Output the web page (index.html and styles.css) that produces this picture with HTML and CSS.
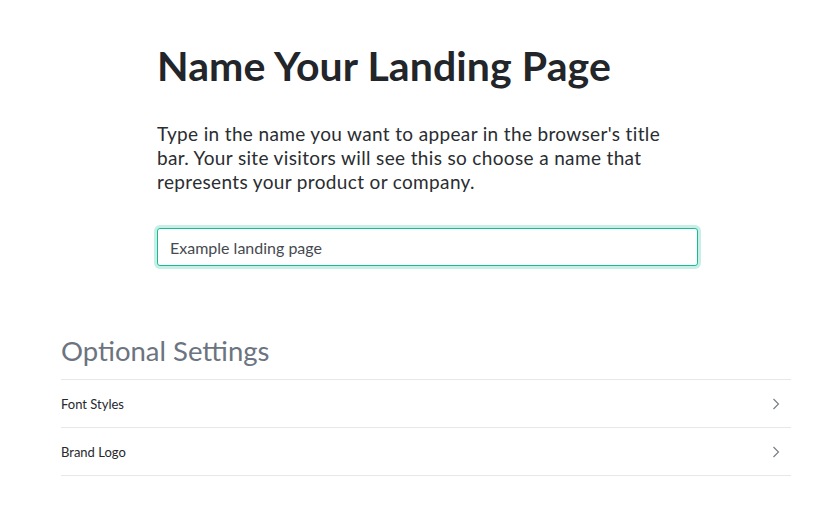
FILE: index.html
```html
<!DOCTYPE html>
<html lang="en">
<head>
<meta charset="utf-8">
<title>Name Your Landing Page</title>
<link rel="stylesheet" href="styles.css">
</head>
<body>
<div class="page">
  <section class="main">
    <h1 class="title">Name Your Landing Page</h1>
    <p class="lead">Type in the name you want to appear in the browser's title bar. Your site visitors will see this so choose a name that represents your product or company.</p>
    <input class="name-input" type="text" value="Example landing page">
  </section>
  <section class="optional">
    <h2 class="optional-title">Optional Settings</h2>
    <ul class="settings">
      <li class="setting"><span>Font Styles</span>
        <svg class="chev" width="8" height="12" viewBox="0 0 8 12"><path d="M1.5 1 L6.5 6 L1.5 11" fill="none" stroke="#777b80" stroke-width="1.1"/></svg>
      </li>
      <li class="setting"><span>Brand Logo</span>
        <svg class="chev" width="8" height="12" viewBox="0 0 8 12"><path d="M1.5 1 L6.5 6 L1.5 11" fill="none" stroke="#777b80" stroke-width="1.1"/></svg>
      </li>
    </ul>
  </section>
</div>
</body>
</html>
```

FILE: styles.css
```css
* { box-sizing: border-box; }
html, body { margin: 0; padding: 0; background: #fff; }
body { font-family: Lato, "Open Sans", sans-serif; color: #25282c; }
.page { width: 730px; margin-left: 61px; padding-top: 42px; }
.main { width: 540px; margin-left: 96px; }
.title { margin: 0; font-size: 41px; font-weight: 700; line-height: 48px; letter-spacing: 0.1px; color: #222529; }
.lead { margin: 32px 0 0; max-width: 520px; font-size: 19px; line-height: 24px; letter-spacing: 0.35px; color: #2a2d31; font-variant-ligatures: none; }
.name-input {
  display: block; margin-top: 34px; width: 541px; height: 38px;
  border: 1px solid #1bb99a; border-radius: 3px;
  box-shadow: 0 0 0 3px #c6efe5;
  padding: 0 12px; font-family: inherit; font-size: 16px; color: #454a50; outline: none;
}
.optional { margin-top: 68px; }
.optional-title { margin: 0; font-size: 27.5px; font-weight: 400; line-height: 34px; color: #6b7480; padding-bottom: 11px; border-bottom: 1px solid #e6e7e9; }
.settings { list-style: none; margin: 0; padding: 0; }
.setting { display: flex; justify-content: space-between; align-items: center; height: 48px; border-bottom: 1px solid #e6e7e9; font-size: 13px; color: #25282c; padding-right: 11px; }
```
